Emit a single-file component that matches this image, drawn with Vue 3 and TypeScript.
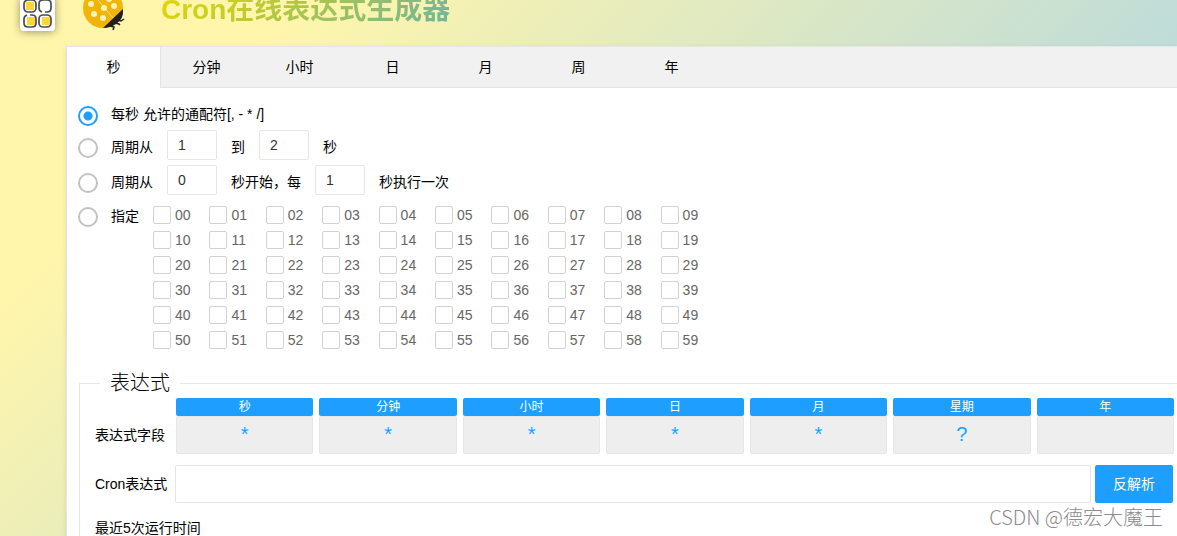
<script setup lang="ts">
import { ref } from 'vue'

const tabs = ['秒', '分钟', '小时', '日', '月', '周', '年']
const activeTab = ref(0)
const mode = ref('every')
const seconds = Array.from({ length: 60 }, (_, i) => String(i).padStart(2, '0'))
const chosen = ref<string[]>([])
const rangeFrom = ref('1')
const rangeTo = ref('2')
const start = ref('0')
const step = ref('1')
const expression = ref('')
const fields = ref([
  { name: '秒', value: '*' },
  { name: '分钟', value: '*' },
  { name: '小时', value: '*' },
  { name: '日', value: '*' },
  { name: '月', value: '*' },
  { name: '星期', value: '?' },
  { name: '年', value: '' },
])
</script>

<template>
  <div class="page">
    <button class="launcher" type="button" aria-label="菜单">
      <svg width="29" height="31" viewBox="0 0 29 31">
        <g fill="#ffd637">
          <rect x="3" y="3" width="8" height="8" />
          <rect x="4" y="18" width="8" height="8" />
          <rect x="19" y="18" width="8" height="8" />
        </g>
        <g fill="none" stroke="#4b4b50" stroke-width="1.7">
          <rect x="1" y="1" width="12" height="12" rx="4" />
          <path d="M19 13 Q16 12 16 9 V5 Q16 1 20 1 H24 Q28 1 28 5 V9 Q28 13 24 13 H22" />
          <path d="M4 16 Q1 17 1 20 V24 Q1 28 5 28 H9 Q13 28 13 24 V20 Q13 16 9 16 H7" />
          <rect x="16" y="16" width="12" height="12" rx="4" />
        </g>
      </svg>
    </button>
    <header class="header">
      <svg class="logo" width="44" height="46" viewBox="0 0 44 46">
        <circle cx="21" cy="22" r="20" fill="#f1b509" />
        <path d="M41 23 Q42 33 34 38 Q28 42 21 42 Z" fill="#231f20" />
        <path d="M11 8 L31 32" stroke="#f8dc8c" stroke-width="1" />
        <g fill="#fff3b4">
          <circle cx="9" cy="18" r="3" />
          <circle cx="22" cy="22" r="3" />
          <circle cx="32" cy="20" r="3" />
          <circle cx="12" cy="28" r="3" />
          <circle cx="21" cy="32" r="3" />
          <circle cx="27" cy="13" r="3" />
        </g>
        <path d="M28 40 L32 41 L31 44 M33 37 L37 38 L38 39 M36 34 L39 35 L42 33" fill="none" stroke="#231f20" stroke-width="1.5" />
      </svg>
      <h1>Cron在线表达式生成器</h1>
    </header>
    <main class="panel">
      <nav class="tabs" role="tablist">
        <button
          v-for="(tab, i) in tabs"
          :key="tab"
          type="button"
          role="tab"
          :aria-selected="activeTab === i"
          :class="{ active: activeTab === i }"
          @click="activeTab = i"
        >{{ tab }}</button>
      </nav>
      <section class="options">
        <div class="option first">
          <label class="choice"><input v-model="mode" type="radio" name="mode" value="every" /><span>每秒 允许的通配符[, - * /]</span></label>
        </div>
        <div class="option">
          <label class="choice"><input v-model="mode" type="radio" name="mode" value="range" /><span>周期从</span></label>
          <input v-model="rangeFrom" class="num" aria-label="起始秒" />
          <span>到</span>
          <input v-model="rangeTo" class="num" aria-label="结束秒" />
          <span>秒</span>
        </div>
        <div class="option">
          <label class="choice"><input v-model="mode" type="radio" name="mode" value="step" /><span>周期从</span></label>
          <input v-model="start" class="num" aria-label="开始秒" />
          <span>秒开始，每</span>
          <input v-model="step" class="num" aria-label="间隔秒" />
          <span>秒执行一次</span>
        </div>
        <div class="option list">
          <label class="choice"><input v-model="mode" type="radio" name="mode" value="list" /><span>指定</span></label>
          <div class="grid">
            <label v-for="s in seconds" :key="s"><input v-model="chosen" type="checkbox" :value="s" />{{ s }}</label>
          </div>
        </div>
      </section>
      <fieldset class="expression">
        <legend>表达式</legend>
        <div class="row parts">
          <span class="caption">表达式字段</span>
          <div class="fields">
            <label v-for="f in fields" :key="f.name" class="field">
              <span>{{ f.name }}</span>
              <input v-model="f.value" readonly />
            </label>
          </div>
        </div>
        <div class="row cron">
          <label class="caption" for="cron">Cron表达式</label>
          <input id="cron" v-model="expression" />
          <button type="button">反解析</button>
        </div>
        <p>最近5次运行时间</p>
      </fieldset>
    </main>
    <div class="watermark">CSDN @德宏大魔王</div>
  </div>
</template>

<style>
body {
  margin: 0;
}
</style>

<style scoped>
* {
  box-sizing: border-box;
}
.page {
  position: relative;
  display: flex;
  flex-direction: column;
  height: 100vh;
  overflow: hidden;
  padding-left: 66px;
  background: linear-gradient(135deg, #fff6ab 212px, #bfdcd9 860px);
  font: 14px/20px "Liberation Sans", "Noto Sans CJK SC", sans-serif;
  color: #000;
}
button,
input {
  font: inherit;
  margin: 0;
}
.launcher {
  position: absolute;
  left: 20px;
  top: -4px;
  width: 35px;
  height: 35px;
  padding: 3px;
  border: 0;
  border-radius: 4px;
  background: #fff;
  box-shadow: 0 1px 8px rgba(0, 0, 0, 0.4);
}
.launcher svg {
  display: block;
}
.header {
  display: flex;
  flex: none;
  align-items: center;
  gap: 35px;
  height: 74px;
  margin-top: -28px;
  padding-left: 16px;
}
h1 {
  margin: 0;
  padding-top: 2px;
  font-size: 28px;
  line-height: 40px;
  background: linear-gradient(135deg, #e6d600, #6fb3a0);
  background-clip: text;
  color: transparent;
}
.panel {
  flex: 1 0 auto;
  border: 1px solid #e6e6e6;
  border-right: 0;
  background: #fff;
  box-shadow: 0 2px 5px rgba(0, 0, 0, 0.1);
}
.tabs {
  display: flex;
  height: 41px;
  background: #f1f1f1;
  border-bottom: 1px solid #e3e3e3;
}
.tabs button {
  width: 93px;
  padding: 0;
  border: 0;
  background: none;
  color: #000;
}
.tabs .active {
  height: 41px;
  padding-bottom: 1px;
  background: #fff;
  box-shadow: 1px 0 #e3e3e3;
}
.options {
  padding: 14px 11px 0;
}
.option {
  display: flex;
  align-items: center;
  gap: 14px;
  height: 35px;
}
.option span {
  padding-bottom: 2px;
}
.option.first {
  height: 28px;
}
.first span {
  padding-bottom: 4px;
}
.choice {
  display: flex;
  align-items: center;
  gap: 13px;
}
.choice input {
  appearance: none;
  width: 20px;
  height: 20px;
  border: 2px solid #c2c2c2;
  border-radius: 50%;
}
.choice input:checked {
  border-color: #1e9fff;
  background: radial-gradient(circle, #1e9fff 4px, transparent 5px);
}
.num {
  align-self: flex-start;
  width: 50px;
  height: 30px;
  padding: 0 10px;
  border: 1px solid #e6e6e6;
  border-radius: 2px;
  color: #333;
}
.option.list {
  align-items: flex-start;
  height: auto;
  padding-top: 2px;
}
.list .choice {
  height: 29px;
}
.grid {
  display: grid;
  width: 564px;
  grid-template-columns: repeat(10, 1fr);
  grid-auto-rows: 25px;
}
.grid label {
  display: flex;
  align-items: center;
  gap: 4px;
  color: #666;
}
.grid input {
  appearance: none;
  width: 18px;
  height: 18px;
  border: 1px solid #d2d2d2;
  border-radius: 2px;
}
.expression {
  min-width: 0;
  margin: 17px 0 0 12px;
  padding: 1px 3px 0 15px;
  border: 1px solid #e6e6e6;
  border-right: 0;
}
legend {
  margin-left: 5px;
  padding: 0 10px;
  font-size: 20px;
  line-height: 28px;
  font-weight: 300;
}
.row {
  display: flex;
  align-items: center;
}
.caption {
  flex: none;
  width: 80px;
}
.parts .caption {
  width: 81px;
  padding-top: 18px;
}
.fields {
  display: grid;
  flex: 1;
  grid-template-columns: repeat(7, 1fr);
  gap: 6px;
}
.field span {
  display: block;
  border-radius: 2px;
  background: #1e9fff;
  color: #fff;
  font-size: 12px;
  line-height: 18px;
  text-align: center;
}
.field input {
  display: block;
  width: 100%;
  height: 38px;
  padding: 0 0 2px;
  border: 1px solid #e6e6e6;
  border-radius: 2px;
  background: #eee;
  color: #1e9fff;
  font-size: 20px;
  line-height: 28px;
  text-align: center;
}
.cron {
  margin-top: 11px;
  padding-right: 1px;
}
.cron input {
  flex: 1;
  min-width: 0;
  height: 38px;
  padding: 0 10px;
  border: 1px solid #e6e6e6;
  border-radius: 2px;
}
.cron button {
  width: 78px;
  height: 38px;
  margin-left: 4px;
  border: 0;
  border-radius: 2px;
  background: #1e9fff;
  color: #fff;
}
p {
  margin: 15px 0 0;
}
.watermark {
  position: absolute;
  right: 14px;
  bottom: 5px;
  color: #8c8c8c;
  font-family: "Noto Sans CJK SC", sans-serif;
  font-size: 20px;
  line-height: 28px;
  font-weight: 300;
}
</style>
